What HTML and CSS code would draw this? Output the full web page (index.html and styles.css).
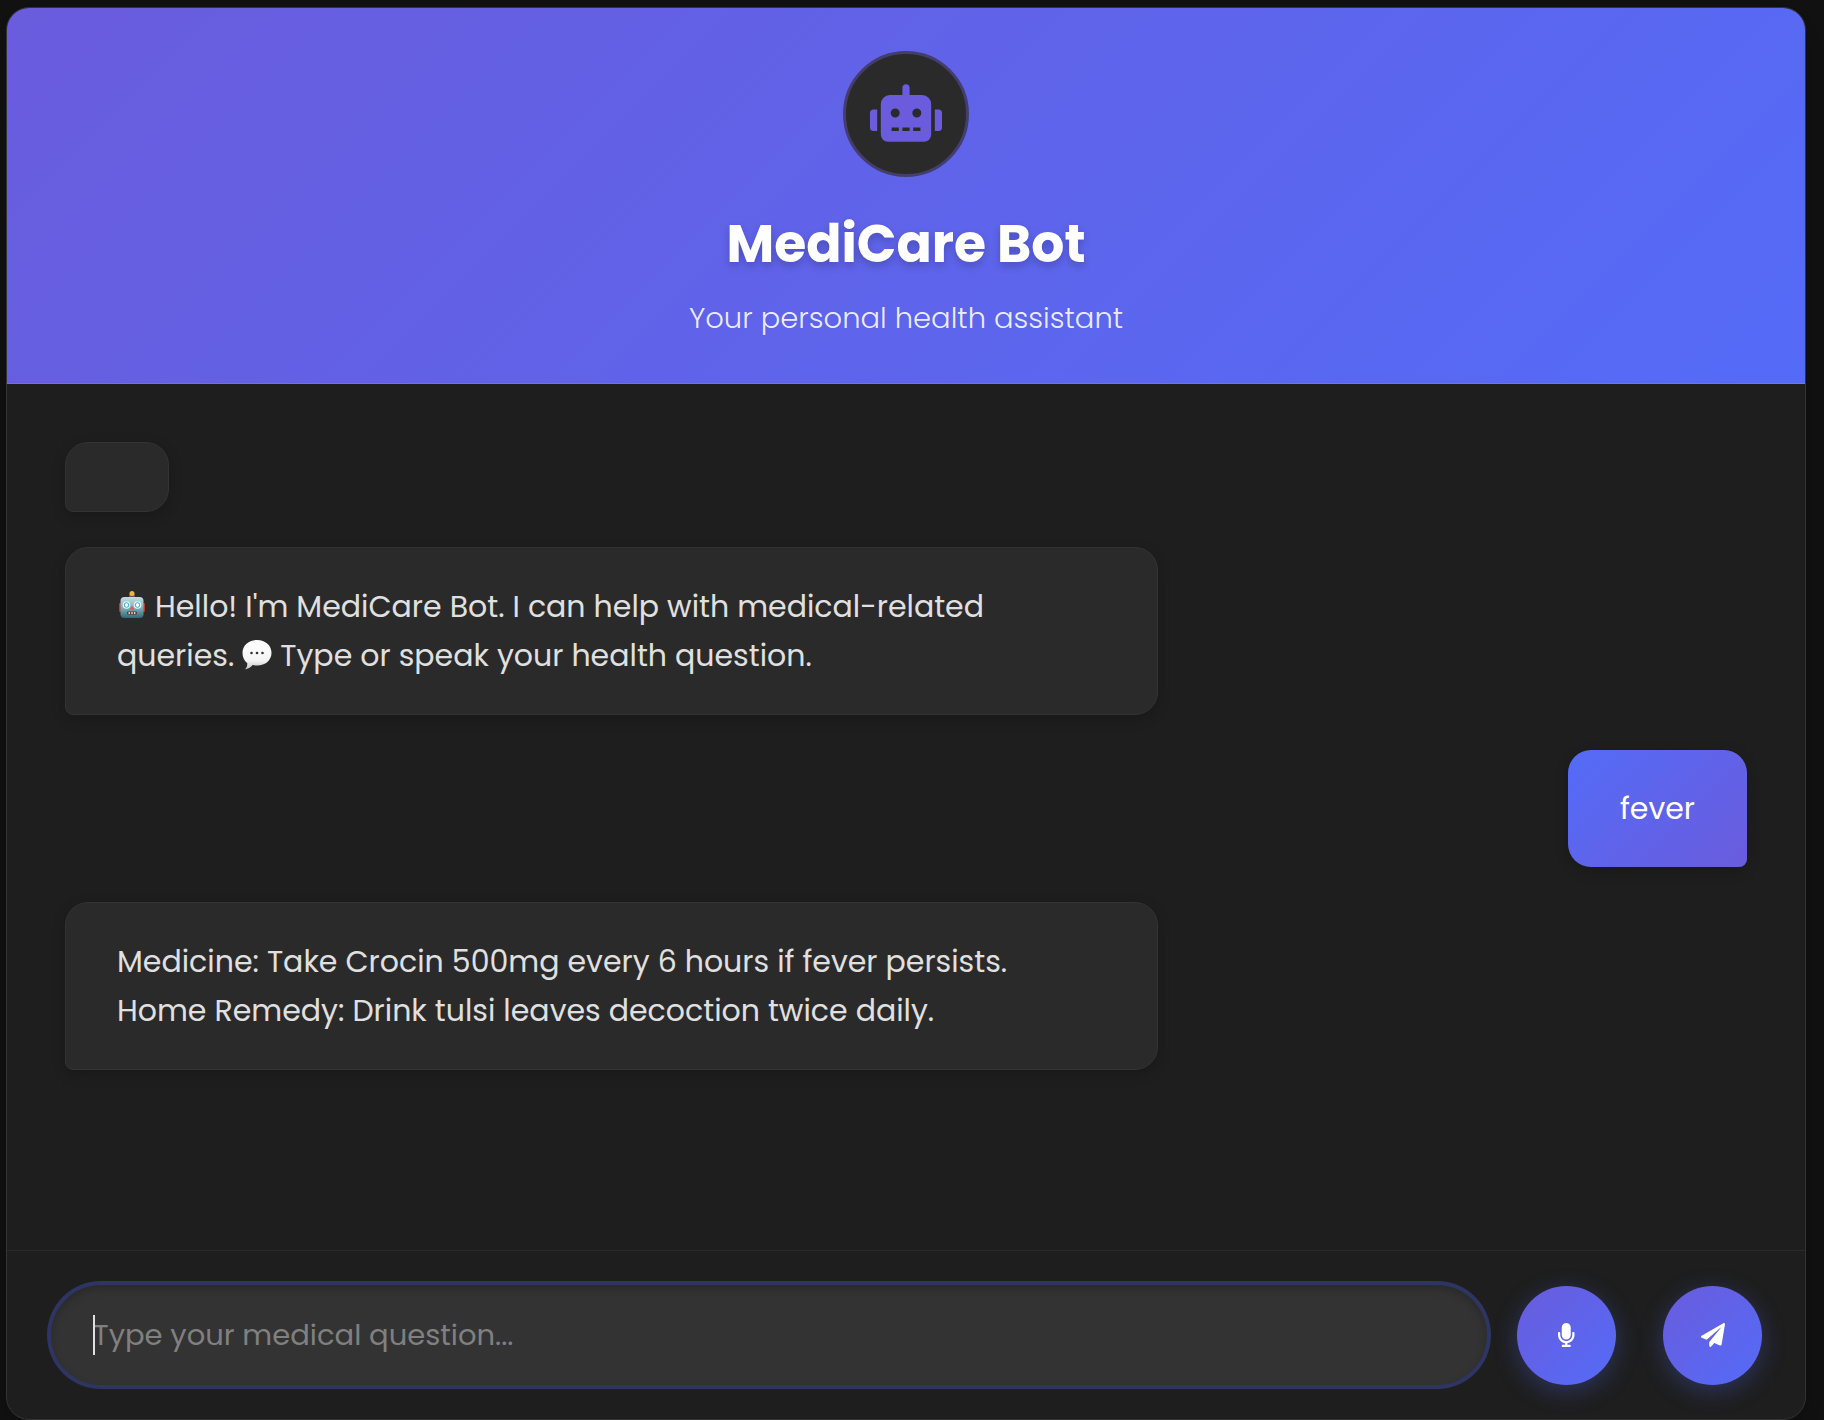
FILE: index.html
```html
<!DOCTYPE html>
<html lang="en">
<head>
<meta charset="utf-8">
<meta name="viewport" content="width=device-width, initial-scale=1">
<title>MediCare Bot</title>
<link rel="stylesheet" href="styles.css">
</head>
<body>
<div class="chat">
  <header class="chat-header">
    <div class="avatar">
      <svg class="avatar-icon" viewBox="0 0 640 512" aria-hidden="true"><path d="M32,224H64V416H32A31.96,31.96,0,0,1,0,384V256A31.96,31.96,0,0,1,32,224Zm512-48V448a64.06,64.06,0,0,1-64,64H160a64.06,64.06,0,0,1-64-64V176a79.97,79.97,0,0,1,80-80H288V32a32,32,0,0,1,64,0V96H464A79.97,79.97,0,0,1,544,176ZM264,256a40,40,0,1,0-40,40A40,40,0,0,0,264,256Zm-8,128H192v32h64Zm96,0H288v32h64ZM456,256a40,40,0,1,0-40,40A40,40,0,0,0,456,256Zm-8,128H384v32h64ZM640,256V384a31.96,31.96,0,0,1-32,32H576V224h32A31.96,31.96,0,0,1,640,256Z"/></svg>
    </div>
    <h1 class="title">MediCare Bot</h1>
    <p class="subtitle">Your personal health assistant</p>
  </header>

  <main class="messages">
    <div class="message bot"></div>
    <div class="message bot long"><svg class="emoji robot" viewBox="-1 0 30 28" role="img" aria-label="Robot"><defs><linearGradient id="face" x1="0" y1="0" x2="0" y2="1"><stop offset="0" stop-color="#c3dde0"/><stop offset=".5" stop-color="#7fb3bb"/><stop offset="1" stop-color="#2f6b77"/></linearGradient></defs><rect x="1" y="12" width="3" height="9" rx="1" fill="#c0392f"/><rect x="24" y="12" width="3" height="9" rx="1" fill="#c0392f"/><rect x="11" y="3" width="6" height="5" rx="1" fill="#6a4a8c"/><circle cx="14" cy="2.600" r="2.500" fill="#f2b632"/><rect x="2.500" y="6" width="23" height="21" rx="4" fill="url(#face)"/><circle cx="8.500" cy="14" r="3.800" fill="#eafaff"/><circle cx="19.500" cy="14" r="3.800" fill="#eafaff"/><circle cx="8.500" cy="14" r="2.300" fill="#fff" stroke="#3aa7d6"/><circle cx="19.500" cy="14" r="2.300" fill="#fff" stroke="#3aa7d6"/><path d="M14 14.500l2.200 4h-4.400z" fill="#e2574c"/><rect x="9" y="20.500" width="10" height="3" rx="1" fill="#5c3532"/><path d="M10.500 22h1.500m1.200 0h1.500m1.200 0h1.500" stroke="#fff" stroke-width="1.500"/></svg> Hello! I'm MediCare Bot. I can help with medical-related<br>queries. <svg class="emoji bubble" viewBox="0 0 30 30" role="img" aria-label="Speech bubble"><defs><linearGradient id="balloon" x1="0" y1="0" x2="0" y2="1"><stop offset="0" stop-color="#fff"/><stop offset=".7" stop-color="#f4f4f4"/><stop offset="1" stop-color="#c4c4c4"/></linearGradient></defs><path d="M15 0C23.500 0 29.500 5.500 29.500 12.800S23.500 25.600 15 25.600c-1.600 0-3-.2-4.400-.5C8.500 27.500 6 29 3 29.500c1.600-1.700 2.400-3.700 2.300-6.200C2.300 21 .5 17.300.5 12.800.5 5.500 6.500 0 15 0z" fill="url(#balloon)"/><circle cx="9.500" cy="13" r="1.300" fill="#333"/><circle cx="15" cy="13" r="1.300" fill="#333"/><circle cx="20.500" cy="13" r="1.300" fill="#333"/></svg> Type or speak your health question.</div>
    <div class="message user">fever</div>
    <div class="message bot long">Medicine: Take Crocin 500mg every 6 hours if fever persists.<br>Home Remedy: Drink tulsi leaves decoction twice daily.</div>
  </main>

  <form class="composer">
    <div class="field">
      <input class="question" type="text" aria-label="Medical question" placeholder="Type your medical question...">
    </div>
    <div class="actions">
      <button class="round-button" type="button" aria-label="Speak">
        <svg class="button-icon" viewBox="0 0 352 512" aria-hidden="true"><path d="M176 352c53.020 0 96-42.980 96-96V96c0-53.020-42.980-96-96-96S80 42.980 80 96v160c0 53.020 42.980 96 96 96zm160-160h-16c-8.840 0-16 7.160-16 16v48c0 74.800-64.490 134.820-140.790 127.380C96.710 376.890 48 317.110 48 250.300V208c0-8.840-7.160-16-16-16H16c-8.840 0-16 7.160-16 16v40.160c0 89.640 63.970 169.550 152 181.690V464H96c-8.840 0-16 7.160-16 16v16c0 8.840 7.160 16 16 16h160c8.840 0 16-7.160 16-16v-16c0-8.840-7.160-16-16-16h-56v-33.770C285.710 418.470 352 344.900 352 256v-48c0-8.840-7.160-16-16-16z"/></svg>
      </button>
      <button class="round-button" type="submit" aria-label="Send">
        <svg class="button-icon" viewBox="0 0 512 512" aria-hidden="true"><path d="M476 3.200L12.500 270.600c-18.100 10.400-15.800 35.600 2.200 43.200L121 358.400l287.300-253.200c5.500-4.900 13.300 2.600 8.600 8.300L176 407v80.500c0 23.600 28.500 32.900 42.500 15.800L282 426l124.600 52.200c14.200 6 30.400-2.900 33-18.200l72-432C515 7.800 493.300-6.800 476 3.200z"/></svg>
      </button>
    </div>
  </form>
</div>
</body>
</html>
```
FILE: styles.css
```css
:root {
  --violet: #6a5cdd;
  --blue: #546bf7;
  --surface: #1e1e1e;
  --card: #2a2a2a;
  --line: #333333;
}

* {
  box-sizing: border-box;
}

body {
  margin: 0;
  min-height: 100vh;
  padding: 7px 18px 0 6px;
  display: flex;
  background: #121212;
  color: #e0e0e0;
  font-family: Poppins, Inter, sans-serif;
  font-size: 30px;
}

.chat {
  flex: 1;
  min-width: 0;
  display: flex;
  flex-direction: column;
  overflow: hidden;
  background: var(--surface);
  border: 1px solid var(--line);
  border-radius: 23px;
  box-shadow: 0 12px 46px rgba(0, 0, 0, 0.3);
}

.chat-header {
  display: flex;
  flex-direction: column;
  align-items: center;
  padding: 43px 24px 41px;
  background: linear-gradient(135deg, var(--violet), var(--blue));
  border-bottom: 1px solid rgba(255, 255, 255, 0.1);
}

.avatar {
  width: 126px;
  height: 126px;
  display: flex;
  align-items: center;
  justify-content: center;
  margin-bottom: 27px;
  padding-bottom: 2px;
  background: var(--card);
  border: 3px solid #443e6e;
  border-radius: 50%;
}

.avatar-icon {
  width: 72px;
  height: 58px;
  fill: var(--violet);
}

.title {
  margin: 0 0 11px;
  color: #ffffff;
  font-size: 52px;
  font-weight: 700;
  line-height: 80px;
  text-shadow: 0 4px 8px rgba(0, 0, 0, 0.2);
}

.subtitle {
  margin: 0;
  color: rgba(255, 255, 255, 0.9);
  font-size: 29px;
  font-weight: 300;
  line-height: 47px;
}

.messages {
  flex: 1;
  display: flex;
  flex-direction: column;
  align-items: flex-start;
  gap: 35px;
  padding: 58px;
}

.message {
  max-width: 65%;
  padding: 34px 52px;
  border-radius: 23px;
  line-height: 49px;
  box-shadow: 0 4px 14px rgba(0, 0, 0, 0.2);
}

.long {
  width: 65%;
}

.bot {
  padding: 34px 51px;
  background: var(--card);
  border: 1px solid var(--line);
  border-bottom-left-radius: 8px;
}

.user {
  align-self: flex-end;
  background: linear-gradient(135deg, var(--blue), var(--violet));
  border-bottom-right-radius: 8px;
  color: #ffffff;
}

.emoji {
  display: inline-block;
}

.robot {
  width: 30px;
  height: 28px;
  vertical-align: -2px;
}

.bubble {
  width: 30px;
  height: 30px;
  vertical-align: -4px;
}

.composer {
  display: flex;
  align-items: center;
  gap: 30px;
  padding: 34px 43px 34px 44px;
  border-top: 1px solid #2a2a2a;
}

.field {
  position: relative;
  flex: 1;
  min-width: 0;
  display: flex;
}

.field::before {
  content: "";
  position: absolute;
  left: 42px;
  top: 30px;
  width: 2px;
  height: 40px;
  background: #e0e0e0;
}

.question {
  width: 100%;
  height: 100px;
  padding: 0 42px;
  border: 0;
  border-radius: 50px;
  outline: none;
  background: #333333;
  color: #e0e0e0;
  font: inherit;
  font-size: 29px;
  box-shadow: 0 0 0 4px #2e3562, inset 0 4px 8px rgba(0, 0, 0, 0.2);
}

.question::placeholder {
  color: #808080;
  opacity: 1;
}

.actions {
  display: flex;
  gap: 47px;
}

.round-button {
  width: 99px;
  height: 99px;
  display: flex;
  align-items: center;
  justify-content: center;
  padding: 0;
  border: 0;
  border-radius: 50%;
  background: linear-gradient(135deg, var(--violet), var(--blue));
  box-shadow: 0 6px 24px rgba(84, 107, 247, 0.3);
  cursor: pointer;
}

.button-icon {
  height: 24px;
  fill: #ffffff;
}
```
